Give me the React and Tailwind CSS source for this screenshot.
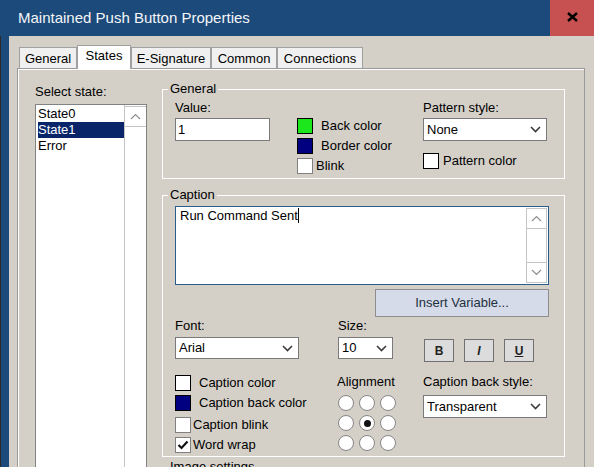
import React from "react";

const Chevron = () => (
  <svg width="11" height="7" viewBox="0 0 11 7">
    <path d="M1 1l4.5 4.5L10 1" fill="none" stroke="#3c3c3c" strokeWidth="1.6" />
  </svg>
);

const ScrollArrow = ({ up }) => (
  <svg width="11" height="7" viewBox="0 0 11 7">
    <path d={up ? "M1 6l4.5-4.5L10 6" : "M1 1l4.5 4.5L10 1"} fill="none" stroke="#8e8e8e" strokeWidth="1.2" />
  </svg>
);

const Select = ({ value, w, h = "h-[23px]" }) => (
  <div className={`${w} ${h} bg-white border border-[#7a7a7a] flex items-center justify-between pl-[3px] pr-[5px]`}>
    <span>{value}</span>
    <Chevron />
  </div>
);

const Swatch = ({ color, border = "border-black" }) => (
  <div className={`w-[16px] h-[16px] shrink-0 border ${border} ${color}`} />
);

const Tab = ({ label, w, active }) =>
  active ? (
    <div className={`${w} h-[24px] -mb-px relative z-10 bg-white border border-b-0 border-[#a0a0a0] flex items-start justify-center pt-[2px]`}>
      {label}
    </div>
  ) : (
    <div className={`${w} h-[21px] bg-[#f0f0f0] border border-b-0 border-[#a0a0a0] flex items-center justify-center pt-[1px]`}>
      {label}
    </div>
  );

const Radio = ({ on }) => (
  <div className="w-[16px] h-[16px] rounded-full bg-white border-[1.5px] border-[#868686] flex items-center justify-center">
    {on && <div className="w-[7px] h-[7px] rounded-full bg-[#111]" />}
  </div>
);

const StyleButton = ({ children, className = "" }) => (
  <div className={`w-[30px] h-[23px] bg-[#dcdcdc] border border-[#707070] flex items-center justify-center text-[12px] font-bold text-[#222] ${className}`}>
    {children}
  </div>
);

export default function App() {
  return (
    <div className="w-[594px] h-[467px] overflow-hidden flex flex-col bg-[#d4d0c8] text-[13px] leading-[16px] text-black font-['Liberation_Sans',Arial,sans-serif]">
      {/* title bar */}
      <div className="h-[36px] flex shrink-0">
        <div className="flex-1 bg-[#1c4a7a] flex items-center pl-[18px] text-[#f4f6f8] text-[15px]">
          Maintained Push Button Properties
        </div>
        <div className="w-[44px] bg-[#c75050] flex items-center justify-center pb-[2px]">
          <svg width="11" height="10" viewBox="0 0 11 10">
            <path d="M1 1l9 8M10 1l-9 8" stroke="#000" strokeWidth="2.4" />
          </svg>
        </div>
      </div>

      <div className="flex flex-1 min-h-0">
        <div className="w-[1px] bg-[#2a2a2a]" />
        <div className="w-[8px] bg-[#1c4a7a]" />

        <div className="flex-1 flex flex-col pl-[8px] pt-[9px] min-h-0">
          {/* tabs */}
          <div className="flex items-end h-[24px] ml-[2px]">
            <Tab label="General" w="w-[58px]" />
            <Tab label="States" w="w-[54px]" active />
            <Tab label="E-Signature" w="w-[80px]" />
            <Tab label="Common" w="w-[66px]" />
            <Tab label="Connections" w="w-[86px]" />
          </div>

          {/* tab panel */}
          <div className="w-[568px] flex-1 border border-b-0 border-[#9a9a9a] shadow-[inset_1px_1px_0_#fff] flex">
            {/* state list */}
            <div className="ml-[17px] pt-[15px] flex flex-col">
              <div>Select state:</div>
              <div className="mt-[4px] w-[112px] h-[400px] bg-white border border-[#828282] flex">
                <div className="flex-1 pl-[2px]">
                  <div className="h-[16px] mt-[1px]">State0</div>
                  <div className="h-[16px] bg-[#0a246a] text-white">State1</div>
                  <div className="h-[16px]">Error</div>
                </div>
                <div className="w-[22px] border-l border-[#c4c4c4] pt-[1px]">
                  <div className="h-[21px] border-y border-[#c4c4c4] flex items-center justify-center">
                    <ScrollArrow up />
                  </div>
                </div>
              </div>
            </div>

            {/* right side */}
            <div className="ml-[15px] w-[403px] flex flex-col">
              {/* General group */}
              <fieldset className="mt-[12px] border border-white">
                <legend className="ml-[5px] px-[2px] h-[16px]">General</legend>
                <div className="pl-[12px] pt-[3px] pb-[4px] flex">
                  <div className="w-[122px]">
                    <div>Value:</div>
                    <div className="mt-[2px] w-[95px] h-[23px] bg-white border border-[#7a7a7a] flex items-center pl-[2px]">1</div>
                  </div>
                  <div className="w-[126px] pt-[18px] flex flex-col gap-[4px]">
                    <div className="flex items-center gap-[8px]">
                      <Swatch color="bg-[#1ce61c]" />
                      <span>Back color</span>
                    </div>
                    <div className="flex items-center gap-[8px]">
                      <Swatch color="bg-[#000080]" />
                      <span>Border color</span>
                    </div>
                    <div className="flex items-center gap-[3px]">
                      <Swatch color="bg-white" border="border-[#808080]" />
                      <span>Blink</span>
                    </div>
                  </div>
                  <div>
                    <div>Pattern style:</div>
                    <div className="mt-[2px]">
                      <Select value="None" w="w-[124px]" />
                    </div>
                    <div className="mt-[12px] flex items-center gap-[4px]">
                      <Swatch color="bg-white" />
                      <span>Pattern color</span>
                    </div>
                  </div>
                </div>
              </fieldset>

              {/* Caption group */}
              <fieldset className="mt-[8px] border border-white">
                <legend className="ml-[5px] px-[2px] h-[16px]">Caption</legend>
                <div className="pl-[12px] pt-[3px] pb-[3px]">
                  <div className="w-[374px] h-[79px] bg-white border border-[#2b5d8c] flex">
                    <div className="flex-1 pl-[4px] pt-[1px] flex items-start">
                      <span>Run Command Sent</span>
                      <span className="w-[1px] h-[15px] bg-black" />
                    </div>
                    <div className="w-[21px] my-[1px] mr-[1px] border border-[#c4c4c4] flex flex-col justify-between">
                      <div className="h-[20px] border-b border-[#c4c4c4] flex items-center justify-center">
                        <ScrollArrow up />
                      </div>
                      <div className="h-[20px] border-t border-[#c4c4c4] flex items-center justify-center">
                        <ScrollArrow />
                      </div>
                    </div>
                  </div>
                  <div className="mt-[4px] ml-[200px] w-[174px] h-[28px] bg-[#d5dbe8] border border-[#8e8e8e] flex items-center justify-center text-[#23303f]">
                    Insert Variable...
                  </div>

                  <div className="mt-[1px] flex">
                    <div className="w-[163px]">
                      <div>Font:</div>
                      <div className="mt-[3px]">
                        <Select value="Arial" w="w-[124px]" h="h-[22px]" />
                      </div>
                    </div>
                    <div className="w-[86px]">
                      <div>Size:</div>
                      <div className="mt-[3px]">
                        <Select value="10" w="w-[55px]" h="h-[22px]" />
                      </div>
                    </div>
                    <div className="pt-[21px] flex gap-[10px]">
                      <StyleButton>B</StyleButton>
                      <StyleButton className="italic">I</StyleButton>
                      <StyleButton className="underline">U</StyleButton>
                    </div>
                  </div>

                  <div className="mt-[12px] flex">
                    <div className="w-[162px] pt-[1px]">
                      <div className="flex items-center gap-[8px]">
                        <Swatch color="bg-white" />
                        <span>Caption color</span>
                      </div>
                      <div className="mt-[4px] flex items-center gap-[8px]">
                        <Swatch color="bg-[#000080]" />
                        <span>Caption back color</span>
                      </div>
                      <div className="mt-[6px] flex items-center gap-[2px]">
                        <Swatch color="bg-white" border="border-[#808080]" />
                        <span>Caption blink</span>
                      </div>
                      <div className="mt-[4px] flex items-center gap-[2px]">
                        <div className="w-[16px] h-[16px] bg-white border border-[#808080] flex items-center justify-center">
                          <svg width="12" height="10" viewBox="0 0 12 10">
                            <path d="M1.5 5l3 3L10.5 1.5" fill="none" stroke="#111" strokeWidth="2.2" />
                          </svg>
                        </div>
                        <span>Word wrap</span>
                      </div>
                    </div>
                    <div className="w-[86px]">
                      <div>Alignment</div>
                      <div className="mt-[5px] ml-[1px] grid grid-cols-3 w-[58px] gap-x-[5px] gap-y-[4px]">
                        <Radio />
                        <Radio />
                        <Radio />
                        <Radio />
                        <Radio on />
                        <Radio />
                        <Radio />
                        <Radio />
                        <Radio />
                      </div>
                    </div>
                    <div>
                      <div>Caption back style:</div>
                      <div className="mt-[5px]">
                        <Select value="Transparent" w="w-[124px]" />
                      </div>
                    </div>
                  </div>
                </div>
              </fieldset>

              {/* Image settings group (cut off) */}
              <fieldset className="mt-[2px] border border-white">
                <legend className="ml-[5px] px-[2px] h-[16px]">Image settings</legend>
                <div className="h-[60px]" />
              </fieldset>
            </div>
          </div>
        </div>
      </div>
    </div>
  );
}
